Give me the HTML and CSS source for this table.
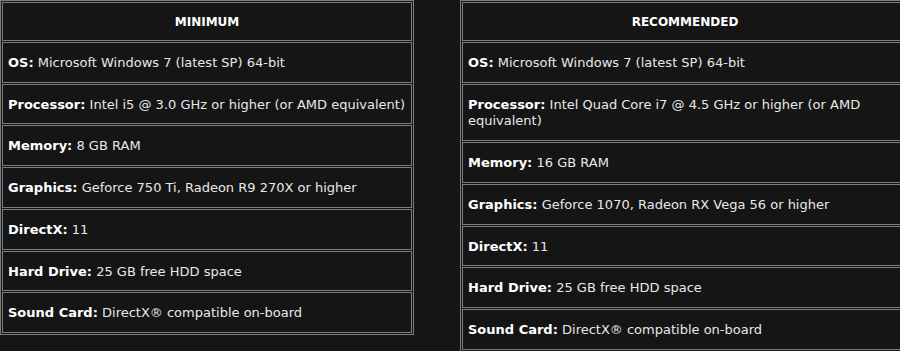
FILE: index.html
```html
<!DOCTYPE html>
<html>
<head>
<meta charset="utf-8">
<link rel="stylesheet" href="styles.css">
</head>
<body>
<div class="specs">
  <table class="spec spec-min">
    <tr><th>MINIMUM</th></tr>
    <tr><td><b>OS:</b> Microsoft Windows 7 (latest SP) 64-bit</td></tr>
    <tr><td><b>Processor:</b> Intel i5 @ 3.0 GHz or higher (or AMD equivalent)</td></tr>
    <tr><td><b>Memory:</b> 8 GB RAM</td></tr>
    <tr><td><b>Graphics:</b> Geforce 750 Ti, Radeon R9 270X or higher</td></tr>
    <tr><td><b>DirectX:</b> 11</td></tr>
    <tr><td><b>Hard Drive:</b> 25 GB free HDD space</td></tr>
    <tr><td><b>Sound Card:</b> DirectX® compatible on-board</td></tr>
  </table>
  <table class="spec spec-rec">
    <tr><th>RECOMMENDED</th></tr>
    <tr><td><b>OS:</b> Microsoft Windows 7 (latest SP) 64-bit</td></tr>
    <tr><td><b>Processor:</b> Intel Quad Core i7 @ 4.5 GHz or higher (or AMD equivalent)</td></tr>
    <tr><td><b>Memory:</b> 16 GB RAM</td></tr>
    <tr><td><b>Graphics:</b> Geforce 1070, Radeon RX Vega 56 or higher</td></tr>
    <tr><td><b>DirectX:</b> 11</td></tr>
    <tr><td><b>Hard Drive:</b> 25 GB free HDD space</td></tr>
    <tr><td><b>Sound Card:</b> DirectX® compatible on-board</td></tr>
  </table>
</div>
</body>
</html>
```

FILE: styles.css
```css
html, body {
  margin: 0;
  padding: 0;
  background: #151515;
}
body {
  font-family: "DejaVu Sans", Verdana, sans-serif;
  font-size: 13px;
  color: #e8e8e8;
  overflow: hidden;
}
.specs {
  display: flex;
  align-items: flex-start;
  gap: 46px;
  width: 910px;
}
.spec {
  border-collapse: separate;
  border-spacing: 1px;
  border: 1px solid #7d7d7d;
  flex: none;
}
.spec-min {
  width: 414px;
}
.spec-min td {
  white-space: nowrap;
}
.spec-rec {
  width: 450px;
}
.spec th,
.spec td {
  border: 1px solid #7d7d7d;
  padding: 12px 5px 10px;
  line-height: 16.7px;
  text-align: left;
}
.spec th {
  text-align: center;
  font-size: 12px;
  font-weight: bold;
  color: #fff;
  padding: 11px 5px 9px;
  line-height: 17px;
}
.spec b {
  color: #fff;
}
```
